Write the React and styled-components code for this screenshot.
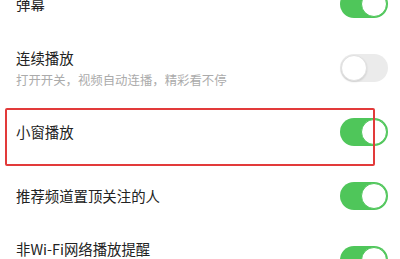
import React from 'react';
import styled, { createGlobalStyle } from 'styled-components';

const GlobalStyle = createGlobalStyle`
    html, body {
        margin: 0;
        padding: 0;
        background: #ffffff;
        overflow: hidden;
    }
    body {
        font-family: "Noto Sans CJK SC", "Noto Sans", sans-serif;
    }
`;

const settings = [
    { title: '弹幕', on: true },
    { title: '连续播放', desc: '打开开关，视频自动连播，精彩看不停', on: false },
    { title: '小窗播放', on: true, marked: true },
    { title: '推荐频道置顶关注的人', on: true },
    { title: '非Wi-Fi网络播放提醒', on: true, lifted: true },
];

export default function App () {
    return (
        <>
            <GlobalStyle />
            <Screen>
                <List>
                    {settings.map((item) => (
                        <Row key={item.title}>
                            <Texts lifted={item.lifted ? 1 : 0}>
                                <Title>{item.title}</Title>
                                {item.desc && <Desc>{item.desc}</Desc>}
                            </Texts>
                            <Toggle on={item.on ? 1 : 0}>
                                <Knob on={item.on ? 1 : 0} />
                            </Toggle>
                            {item.marked && <Highlight />}
                        </Row>
                    ))}
                </List>
            </Screen>
        </>
    );
}

const Screen = styled.div`
    width: 400px;
    height: 259px;
    overflow: hidden;
    background: #ffffff;
`;

// list is scrolled a bit, first row cut off at the top
const List = styled.div`
    display: flex;
    flex-direction: column;
    margin-top: -28px;
`;

const Row = styled.div`
    position: relative;
    display: flex;
    align-items: center;
    justify-content: space-between;
    height: 64px;
    padding: 0 12px 0 16px;
    box-sizing: border-box;
`;

const Texts = styled.div`
    display: flex;
    flex-direction: column;
    gap: 5px;
    margin-bottom: ${(p) => (p.lifted ? '22px' : '0')};
`;

const Title = styled.div`
    font-size: 14.4px;
    line-height: 18px;
    color: #222222;
`;

const Desc = styled.div`
    font-size: 12.4px;
    line-height: 16px;
    color: #ababab;
`;

const Toggle = styled.div`
    position: relative;
    display: flex;
    align-items: center;
    justify-content: ${(p) => (p.on ? 'flex-end' : 'flex-start')};
    flex-shrink: 0;
    width: 48px;
    height: 28px;
    border-radius: 14px;
    background: ${(p) => (p.on ? '#4fc65a' : '#ebebeb')};
    box-sizing: border-box;
    padding: 1px;
`;

const Knob = styled.div`
    width: 26px;
    height: 26px;
    border-radius: 50%;
    background: #ffffff;
    box-sizing: border-box;
    border: 1.5px solid ${(p) => (p.on ? '#4fc65a' : '#e0e0e0')};
    box-shadow: ${(p) => (p.on ? 'none' : '0 1px 2px rgba(0,0,0,0.12)')};
`;

const Highlight = styled.div`
    position: absolute;
    left: 5px;
    top: 8px;
    width: 370px;
    height: 58px;
    border: 2px solid #e23a3a;
    border-radius: 2px;
    box-sizing: border-box;
    pointer-events: none;
`;
